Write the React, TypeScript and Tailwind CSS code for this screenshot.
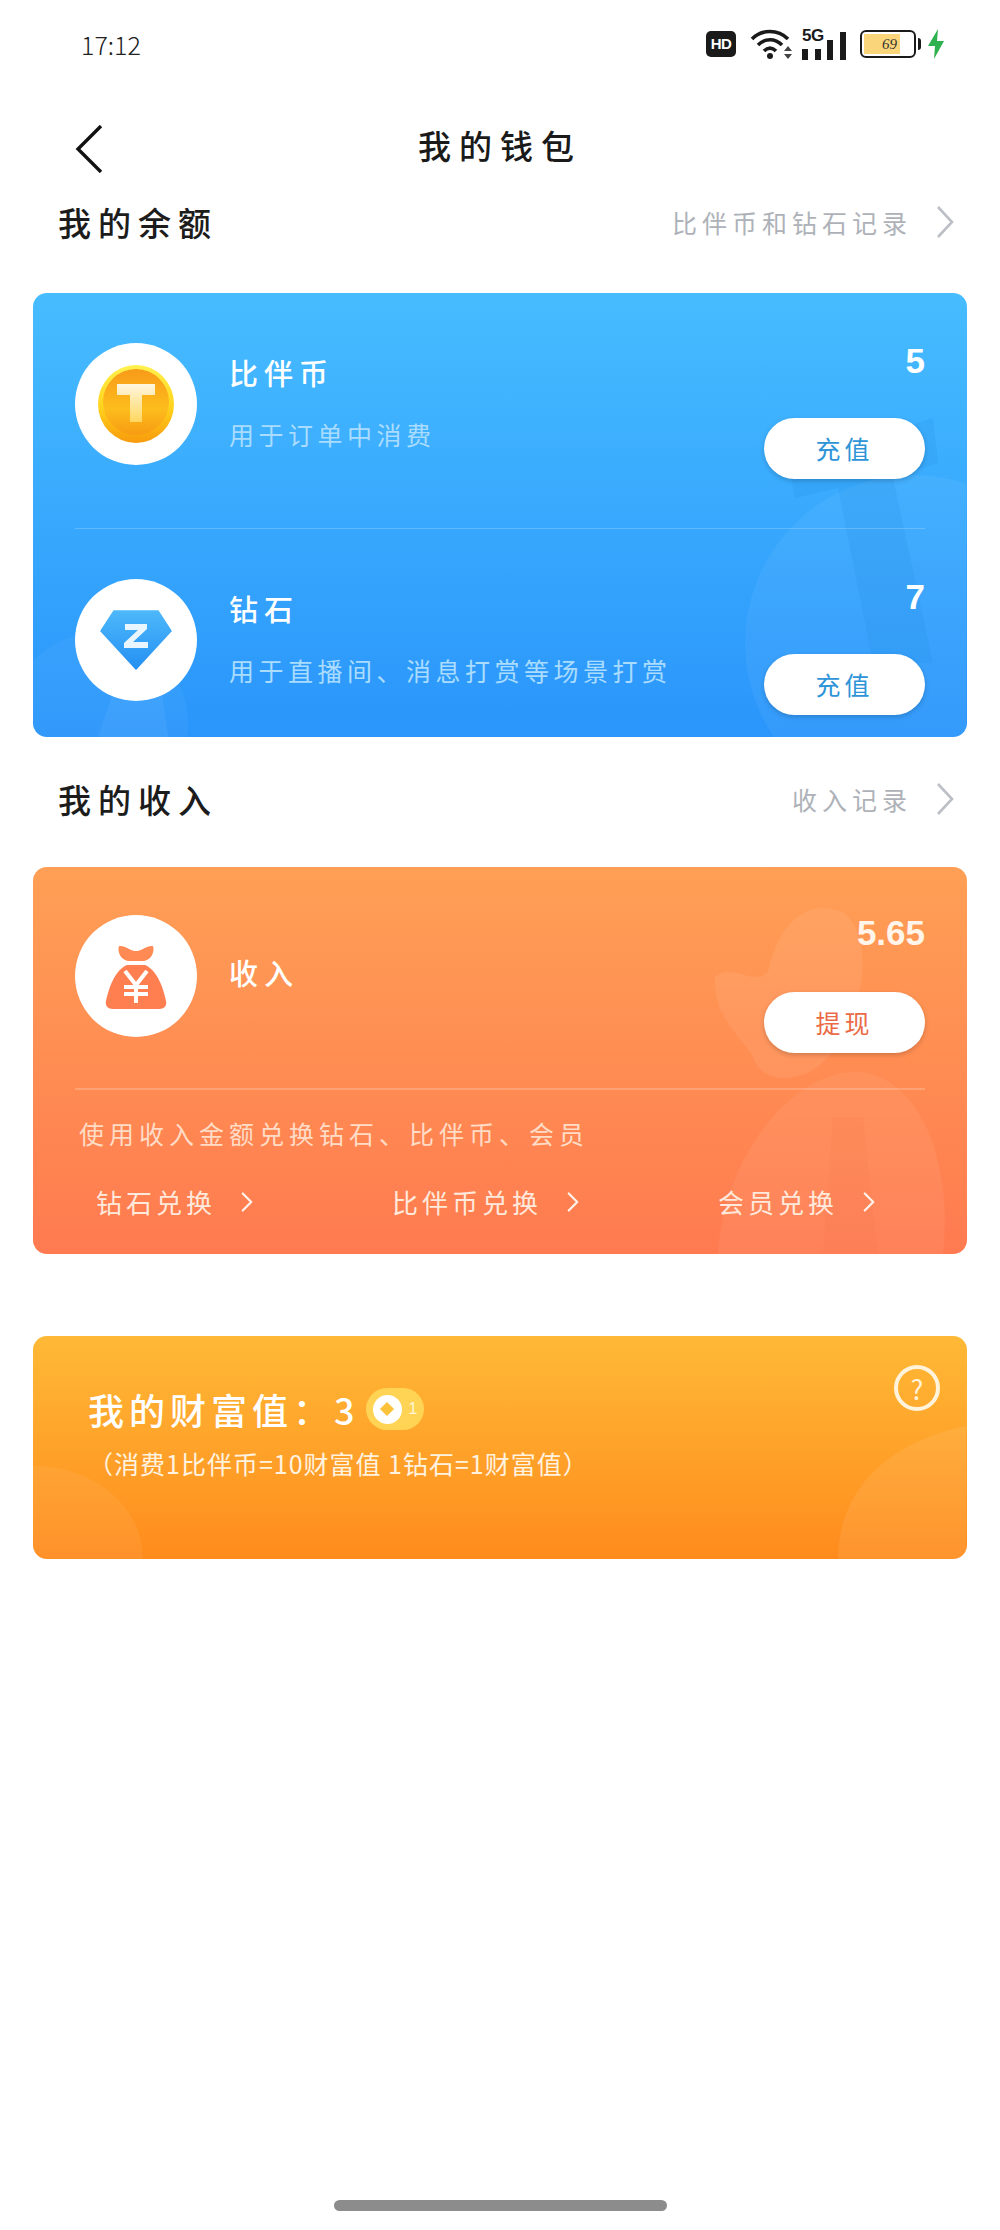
import { ChevronRight } from "lucide-react";

const cjk = "font-['Noto_Sans_CJK_SC','Noto_Sans',sans-serif]";

function StatusIcons() {
  return (
    <div className="flex items-center">
      <div className="flex h-[26px] w-[30px] items-center justify-center rounded-[5px] bg-[#1a1a1a] font-['Liberation_Sans',sans-serif] text-[15px] font-bold tracking-[-0.5px] text-white">
        HD
      </div>
      <svg viewBox="0 0 44 32" className="ml-[14px] h-[32px] w-[44px]">
        <path d="M2 11 C12 1 28 1 38 11" fill="none" stroke="#1a1a1a" strokeWidth="3.6" />
        <path d="M8 17 C15 10 25 10 32 17" fill="none" stroke="#1a1a1a" strokeWidth="3.6" />
        <path d="M14 23 C18 19 22 19 26 23" fill="none" stroke="#1a1a1a" strokeWidth="3.6" />
        <circle cx="20" cy="28" r="3" fill="#1a1a1a" />
        <path d="M38 18 l4 5 h-8 z M38 31 l4 -5 h-8 z" fill="#444" />
      </svg>
      <div className="relative ml-[8px] flex h-[32px] w-[44px] items-end justify-between">
        <span className="absolute -top-[5px] left-0 font-['Liberation_Sans',sans-serif] text-[17px] font-bold tracking-[-0.5px] text-[#1a1a1a]">
          5G
        </span>
        <div className="h-[11px] w-[6px] bg-[#1a1a1a]" />
        <div className="h-[11px] w-[6px] bg-[#1a1a1a]" />
        <div className="h-[20px] w-[6px] bg-[#1a1a1a]" />
        <div className="h-[28px] w-[6px] bg-[#1a1a1a]" />
      </div>
      <div className="ml-[14px] flex h-[28px] w-[56px] items-center rounded-[6px] border-2 border-[#1a1a1a] p-[2px]">
        <div className="flex h-full w-[36px] items-center justify-end bg-[#fad57a] pr-[3px] font-['Liberation_Serif',serif] text-[15px] italic text-[#333]">
          69
        </div>
      </div>
      <div className="ml-[2px] h-[12px] w-[3px] rounded-r-sm bg-[#1a1a1a]" />
      <svg viewBox="0 0 18 30" className="ml-[6px] h-[30px] w-[18px]">
        <path d="M11 0 L1 17 H8 L7 30 L17 12 H10 Z" fill="#2fb14f" />
      </svg>
    </div>
  );
}

function SectionHeader({ title, link }: { title: string; link: string }) {
  return (
    <div className="flex h-[44px] items-center justify-between pl-[58px] pr-[46px]">
      <span className="text-[33px] font-medium leading-none tracking-[7px] text-[#1c1c1c]">{title}</span>
      <div className="flex items-center">
        <span className="text-[25px] leading-none tracking-[5px] text-[#aeb2b8]">{link}</span>
        <svg viewBox="0 0 18 32" className="ml-[24px] h-[32px] w-[18px]">
          <path d="M2 1 L16 16 L2 31" fill="none" stroke="#bcc0c6" strokeWidth="2.6" />
        </svg>
      </div>
    </div>
  );
}

function AvatarCircle({ children }: { children: React.ReactNode }) {
  return <div className="flex h-[122px] w-[122px] shrink-0 items-center justify-center rounded-full bg-white">{children}</div>;
}

function PillButton({ label, color }: { label: string; color: string }) {
  return (
    <button
      type="button"
      className={`flex h-[61px] w-[161px] items-center justify-center rounded-full bg-white text-[25px] tracking-[4px] shadow-[0_2px_5px_rgba(0,0,0,0.18)] ${color}`}
    >
      {label}
    </button>
  );
}

function CoinIcon() {
  return (
    <svg viewBox="0 0 76 80" className="h-[80px] w-[76px]">
      <defs>
        <linearGradient id="coinEdge" x1="0" y1="0" x2="0" y2="1">
          <stop offset="0" stopColor="#fff14d" />
          <stop offset="0.55" stopColor="#ffd21c" />
          <stop offset="1" stopColor="#f79a0c" />
        </linearGradient>
        <linearGradient id="coinFace" x1="0" y1="0" x2="0" y2="1">
          <stop offset="0" stopColor="#f89a19" />
          <stop offset="0.6" stopColor="#fdbd1c" />
          <stop offset="1" stopColor="#f79b12" />
        </linearGradient>
        <linearGradient id="coinT" x1="0" y1="0" x2="0" y2="1">
          <stop offset="0" stopColor="#fff6df" />
          <stop offset="1" stopColor="#ffd75f" />
        </linearGradient>
      </defs>
      <ellipse cx="38" cy="40" rx="38" ry="39" fill="url(#coinEdge)" />
      <ellipse cx="38" cy="38" rx="33" ry="33" fill="url(#coinFace)" />
      <path d="M19 20 H57 V31 H44 V58 H32 V31 H19 Z" fill="url(#coinT)" />
    </svg>
  );
}

function DiamondIcon() {
  return (
    <svg viewBox="0 0 72 60" className="h-[60px] w-[72px]">
      <defs>
        <linearGradient id="gem" x1="0" y1="0" x2="0" y2="1">
          <stop offset="0" stopColor="#4db8fb" />
          <stop offset="1" stopColor="#2490f2" />
        </linearGradient>
      </defs>
      <path d="M14 1 H58 L71 21 L36 59 L1 21 Z" fill="url(#gem)" stroke="url(#gem)" strokeWidth="1.5" strokeLinejoin="round" />
      <path d="M25 14 H47 V19 L33 32 H48 V38 H24 V33 L38 20 H25 Z" fill="#e9f6ff" />
    </svg>
  );
}

function BagIcon() {
  return (
    <svg viewBox="0 0 62 66" className="h-[66px] w-[62px]">
      <path d="M14 3 C20 2 25 8 31 8 C37 8 42 2 48 3 C50 9 46 17 39 18 H23 C16 17 12 9 14 3 Z" fill="#ff8a54" />
      <path d="M22 22 H40 C52 27 58 44 61 58 C62 63 59 66 54 66 H8 C3 66 0 63 1 58 C4 44 10 27 22 22 Z" fill="#ff7f50" />
      <path d="M20 28 L31 42 L42 28 M31 42 V60 M19 44 H43 M19 51 H43" fill="none" stroke="#fff" strokeWidth="4" />
    </svg>
  );
}

function BlueRow({
  icon,
  title,
  desc,
  amount,
}: {
  icon: React.ReactNode;
  title: string;
  desc: string;
  amount: string;
}) {
  return (
    <div className="flex items-start">
      <AvatarCircle>{icon}</AvatarCircle>
      <div className="ml-[32px] flex-1 pt-[10px]">
        <div className="text-[29px] font-medium leading-[38px] tracking-[6px] text-white">{title}</div>
        <div className="mt-[24px] text-[25px] leading-[38px] tracking-[4.5px] text-[#a9dcff]">{desc}</div>
      </div>
      <div className="flex flex-col items-end">
        <div className="-mt-[2px] h-[56px] font-['Liberation_Sans',sans-serif] text-[35px] font-bold leading-[40px] text-white">{amount}</div>
        <div className="mt-[21px]">
          <PillButton label="充值" color="text-[#2e94d8]" />
        </div>
      </div>
    </div>
  );
}

function ExchangeLink({ label, className }: { label: string; className: string }) {
  return (
    <div className={`flex items-center ${className}`}>
      <span className="text-[26px] leading-none tracking-[4px] text-[#ffe9dc]">{label}</span>
      <ChevronRight className="ml-[14px] h-[44px] w-[34px] text-[#fff1e8]" strokeWidth={1.6} />
    </div>
  );
}

export default function App() {
  return (
    <div className={`h-[2230px] w-[1000px] bg-white ${cjk} relative`}>
      {/* status bar */}
      <div className="flex h-[88px] items-center justify-between pl-[81px] pr-[55px]">
        <span className="text-[25px] font-light leading-none text-[#222]">17:12</span>
        <StatusIcons />
      </div>

      {/* title bar */}
      <div className="relative flex h-[114px] items-center justify-center">
        <svg viewBox="0 0 28 48" className="absolute left-[75px] top-[37px] h-[48px] w-[28px]">
          <path d="M26 1 L3 24 L26 47" fill="none" stroke="#111" strokeWidth="3.4" />
        </svg>
        <span className="pb-[0px] text-[33px] font-medium leading-none tracking-[8px] text-[#1a1a1a]">我的钱包</span>
      </div>

      <div className="-mt-[2px]">
        <SectionHeader title="我的余额" link="比伴币和钻石记录" />
      </div>

      {/* balance */}
      <div className="relative mx-[33px] mt-[49px] h-[444px] overflow-hidden rounded-[14px] bg-gradient-to-b from-[#47bcff] to-[#2a95fb] px-[42px] pt-[50px]">
        <svg viewBox="0 0 933 444" className="absolute inset-0 h-[444px] w-[933px]">
          <circle cx="880" cy="350" r="168" fill="#fff" fillOpacity="0.05" />
          <path d="M755 170 L900 125 L905 170 L860 185 L900 370 L840 370 L805 195 L762 205 Z" fill="#1f86e0" fillOpacity="0.16" />
          <circle cx="65" cy="430" r="90" fill="#fff" fillOpacity="0.04" />
          <path d="M65 444 L90 370 L125 370 L135 444 Z" fill="#fff" fillOpacity="0.05" />
        </svg>
        <div className="relative">
          <BlueRow icon={<CoinIcon />} title="比伴币" desc="用于订单中消费" amount="5" />
          <div className="mb-[50px] mt-[49px] h-px bg-white/20" />
          <BlueRow icon={<DiamondIcon />} title="钻石" desc="用于直播间、消息打赏等场景打赏" amount="7" />
        </div>
      </div>

      <div className="mt-[40px]">
        <SectionHeader title="我的收入" link="收入记录" />
      </div>

      {/* income */}
      <div className="relative mx-[33px] mt-[46px] h-[387px] overflow-hidden rounded-[14px] bg-gradient-to-b from-[#ff9f55] to-[#ff7a50] px-[42px] pt-[48px]">
        <svg viewBox="0 0 933 387" className="absolute inset-0 h-[387px] w-[933px]">
          <path d="M682 110 C700 95 720 120 735 105 C745 60 770 30 810 45 C845 70 830 160 790 195 C770 215 730 220 720 190 C705 165 680 150 682 110 Z" fill="#fff" fillOpacity="0.07" />
          <path d="M685 387 C690 290 760 200 830 205 C890 215 920 300 910 387 Z" fill="#fff" fillOpacity="0.06" />
          <path d="M800 250 L830 250 L845 387 L790 387 Z" fill="#e8603a" fillOpacity="0.08" />
        </svg>
        <div className="relative">
          <div className="flex items-start">
            <AvatarCircle>
              <BagIcon />
            </AvatarCircle>
            <div className="ml-[32px] flex-1 pt-[38px] text-[29px] font-medium leading-[38px] tracking-[6px] text-white">收入</div>
            <div className="flex flex-col items-end">
              <div className="-mt-[6px] h-[56px] font-['Liberation_Sans',sans-serif] text-[35px] font-bold leading-[48px] text-[#fff5ea]">5.65</div>
              <div className="mt-[27px]">
                <PillButton label="提现" color="text-[#ea6a45]" />
              </div>
            </div>
          </div>
          <div className="mt-[35px] h-[2px] bg-white/20" />
          <div className="mt-[28px] pl-[4px] text-[25px] leading-[30px] tracking-[5px] text-[#ffdcc6]">使用收入金额兑换钻石、比伴币、会员</div>
          <div className="mt-[32px] flex">
            <ExchangeLink label="钻石兑换" className="ml-[21px] w-[296px]" />
            <ExchangeLink label="比伴币兑换" className="w-[326px]" />
            <ExchangeLink label="会员兑换" className="" />
          </div>
        </div>
      </div>

      {/* wealth */}
      <div className="relative mx-[33px] mt-[82px] h-[223px] overflow-hidden rounded-[14px] bg-gradient-to-b from-[#ffb936] to-[#ff8b1c] pl-[55px] pt-[51px]">
        <svg viewBox="0 0 933 223" className="absolute inset-0 h-[223px] w-[933px]">
          <path d="M805 223 C805 150 860 105 933 90 V223 Z" fill="#fff" fillOpacity="0.08" />
          <path d="M0 130 C60 130 110 170 110 223 H0 Z" fill="#fff" fillOpacity="0.06" />
        </svg>
        <div className="absolute right-[27px] top-[29px] flex h-[46px] w-[46px] items-center justify-center rounded-full border-[4px] border-[#fff3dc] text-[27px] leading-none text-[#fff3dc]">
          ?
        </div>
        <div className="relative flex items-center">
          <span className="text-[36px] font-medium leading-[44px] tracking-[5px] text-white">我的财富值：3</span>
          <div className="ml-[6px] flex h-[42px] w-[58px] items-center rounded-full bg-[#ffd455]">
            <div className="ml-[7px] flex h-[29px] w-[29px] items-center justify-center rounded-full bg-white">
              <div className="h-[10px] w-[10px] rotate-45 bg-[#fcc23a]" />
            </div>
            <span className="ml-[7px] font-['Liberation_Sans',sans-serif] text-[16px] leading-none text-[#fff6d8]">1</span>
          </div>
        </div>
        <div className="relative mt-[16px] text-[25px] leading-[32px] tracking-[1px] text-[#fff3e0]">
          （消费1比伴币=10财富值 1钻石=1财富值）
        </div>
      </div>

      {/* home indicator */}
      <div className="absolute bottom-[19px] left-[334px] h-[11px] w-[333px] rounded-full bg-[#8c8c8c]" />
    </div>
  );
}
